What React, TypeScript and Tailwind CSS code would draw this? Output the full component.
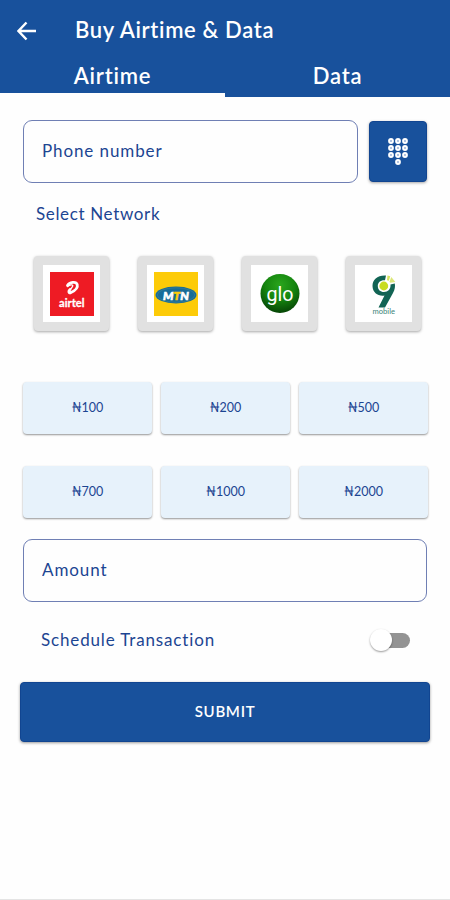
import { useState } from "react";
import type { ReactNode } from "react";

const amounts = ["100", "200", "500", "700", "1000", "2000"];

export default function App() {
  const [tab, setTab] = useState<"airtime" | "data">("airtime");
  const [phone, setPhone] = useState("");
  const [amount, setAmount] = useState("");
  const [scheduled, setScheduled] = useState(false);

  return (
    <div className="flex h-[900px] w-[450px] flex-col overflow-hidden border-b border-[#e4e4e4] bg-[#fefefe] font-['Lato',sans-serif] text-[#1c4592]">
      <header className="h-[97px] shrink-0 bg-[#18519c] text-white">
        <div className="flex h-[60px] items-center pl-[17px]">
          <BackIcon />
          <h1 className="ml-[38px] pb-px text-[22px] font-semibold tracking-[0.65px]">
            Buy Airtime &amp; Data
          </h1>
        </div>
        <div className="flex h-[37px]">
          <Tab
            label="Airtime"
            active={tab === "airtime"}
            onClick={() => setTab("airtime")}
          />
          <Tab
            label="Data"
            active={tab === "data"}
            onClick={() => setTab("data")}
          />
        </div>
      </header>

      <main className="flex flex-col pt-[23px]">
        <div className="flex items-center gap-[11px] pr-[23px] pl-[23px]">
          <OutlinedInput
            placeholder="Phone number"
            value={phone}
            onChange={setPhone}
          />
          <button
            type="button"
            aria-label="Contacts"
            className="flex h-[61px] w-[58px] shrink-0 items-center justify-center rounded-[4px] border border-[#114591] bg-[#18519c] shadow-[0_1px_3px_rgba(0,0,0,0.35)]"
          >
            <DialpadIcon />
          </button>
        </div>

        <p className="mt-[21px] ml-[36px] h-5 text-[17px] leading-5 tracking-[0.65px]">
          Select Network
        </p>

        <div className="mt-[32px] flex justify-between pr-[29px] pl-[34px]">
          <NetworkTile>
            <AirtelLogo />
          </NetworkTile>
          <NetworkTile>
            <MtnLogo />
          </NetworkTile>
          <NetworkTile>
            <GloLogo />
          </NetworkTile>
          <NetworkTile>
            <NineMobileLogo />
          </NetworkTile>
        </div>

        <div className="mt-[51px] grid grid-cols-3 gap-x-[9px] gap-y-[32px] pr-[22px] pl-[23px]">
          {amounts.map((value) => (
            <button
              key={value}
              type="button"
              onClick={() => setAmount(value)}
              className="h-[52px] rounded-[4px] bg-[#e7f2fb] text-[12.5px] shadow-[0_1px_2px_rgba(0,0,0,0.42)]"
            >
              ₦{value}
            </button>
          ))}
        </div>

        <div className="mt-[21px] flex px-[23px]">
          <OutlinedInput
            placeholder="Amount"
            value={amount}
            onChange={setAmount}
          />
        </div>

        <div className="mt-[25px] flex h-[26px] items-center justify-between pr-[40px] pl-[41px]">
          <span className="text-[17px] tracking-[0.85px]">
            Schedule Transaction
          </span>
          <button
            type="button"
            role="switch"
            aria-checked={scheduled}
            aria-label="Schedule Transaction"
            onClick={() => setScheduled(!scheduled)}
            className="flex h-[15px] w-[34px] items-center rounded-full bg-[#939393]"
          >
            <span
              className={
                scheduled
                  ? "ml-[17px] size-[22px] shrink-0 rounded-full bg-[#18519c] shadow-[0_1px_2px_rgba(0,0,0,0.4)]"
                  : "-ml-[6px] size-[22px] shrink-0 rounded-full bg-white shadow-[0_1px_2px_rgba(0,0,0,0.4)]"
              }
            />
          </button>
        </div>

        <button
          type="button"
          className="mx-[20px] mt-[29px] h-[60px] rounded-[4px] border border-[#114591] bg-[#18519c] pb-[2px] text-[15px] font-semibold tracking-[0.7px] text-white shadow-[0_1px_3px_rgba(0,0,0,0.4)]"
        >
          SUBMIT
        </button>
      </main>
    </div>
  );
}

function Tab({
  label,
  active,
  onClick,
}: {
  label: string;
  active: boolean;
  onClick: () => void;
}) {
  return (
    <button
      type="button"
      onClick={onClick}
      className={
        active
          ? "flex-1 border-b-4 border-[#fefefe] pb-[2px] text-[22px] leading-[30px] font-semibold tracking-[0.8px]"
          : "flex-1 border-b-4 border-[#18519c] pb-[2px] text-[22px] leading-[30px] font-semibold tracking-[0.8px]"
      }
    >
      {label}
    </button>
  );
}

function OutlinedInput({
  placeholder,
  value,
  onChange,
}: {
  placeholder: string;
  value: string;
  onChange: (value: string) => void;
}) {
  return (
    <input
      type="text"
      placeholder={placeholder}
      value={value}
      onChange={(e) => onChange(e.target.value)}
      className="h-[63px] min-w-0 flex-1 rounded-[9px] border border-[#6f7fb4] bg-transparent px-[18px] pb-[3px] text-[17px] tracking-[0.9px] outline-none placeholder:text-[#1c4592]"
    />
  );
}

function NetworkTile({ children }: { children: ReactNode }) {
  return (
    <button
      type="button"
      className="flex size-[75px] items-center justify-center rounded-[4px] border-[9px] border-[#e1e1e1] bg-white shadow-[0_1px_3px_rgba(0,0,0,0.35)]"
    >
      {children}
    </button>
  );
}

function BackIcon() {
  return (
    <svg width="20" height="20" viewBox="0 0 20 20" className="mt-[2px]">
      <path
        d="M19 10H2M9.500 1.500L1.500 10L9.500 18.500"
        fill="none"
        stroke="currentColor"
        strokeWidth="2.400"
      />
    </svg>
  );
}

function DialpadIcon() {
  const keys = [
    [3, 3],
    [10, 3],
    [17, 3],
    [3, 10],
    [10, 10],
    [17, 10],
    [3, 17],
    [10, 17],
    [17, 17],
    [10, 24],
  ];
  return (
    <svg width="20" height="27" viewBox="0 0 20 27">
      {keys.map(([x, y]) => (
        <g key={`${x}-${y}`}>
          <circle cx={x} cy={y} r="2.9" fill="#fff" />
          <circle cx={x} cy={y} r="0.9" fill="#8fa9d3" />
        </g>
      ))}
    </svg>
  );
}

function AirtelLogo() {
  return (
    <svg width="44" height="44" viewBox="0 0 44 44">
      <rect width="44" height="44" fill="#ee1b24" />
      <path
        d="M17.500 13.500C19.500 10 26 9 27.200 12.500C28.200 16 24.500 19 20.500 20.800C18.500 21.300 18.300 19 20 17.500"
        fill="none"
        stroke="#fff"
        strokeWidth="2.800"
        strokeLinecap="round"
      />
      <path
        d="M17.500 14.500C20 12.500 22.800 12.300 22.800 13.800C22.800 15.200 20.800 16.500 19.800 18"
        fill="none"
        stroke="#fff"
        strokeWidth="1.300"
        strokeLinecap="round"
      />
      <text
        x="9"
        y="34.500"
        fill="#fff"
        stroke="#fff"
        strokeWidth="0.300"
        fontSize="12"
        fontWeight="700"
        textLength="25.500"
        lengthAdjust="spacingAndGlyphs"
      >
        airtel
      </text>
    </svg>
  );
}

function MtnLogo() {
  return (
    <svg width="44" height="44" viewBox="0 0 44 44">
      <rect width="44" height="44" fill="#fdcb08" />
      <ellipse cx="22" cy="23" rx="20.500" ry="8.500" fill="#176c98" />
      <ellipse
        cx="22"
        cy="23"
        rx="18.700"
        ry="7.200"
        fill="none"
        stroke="#3e8092"
        strokeWidth="0.700"
      />
      <text
        x="9"
        y="27.500"
        fill="#fff"
        stroke="#fff"
        strokeWidth="0.600"
        fontSize="12"
        fontWeight="900"
        fontStyle="italic"
        textLength="26"
        lengthAdjust="spacingAndGlyphs"
      >
        M
        <tspan fill="#fdcb08" stroke="#fdcb08">
          T
        </tspan>
        N
      </text>
    </svg>
  );
}

function GloLogo() {
  return (
    <svg width="44" height="44" viewBox="0 0 44 44">
      <defs>
        <radialGradient id="glo-ball" cx="0.5" cy="0.28" r="0.75">
          <stop offset="0" stopColor="#2aa51d" />
          <stop offset="0.5" stopColor="#15860f" />
          <stop offset="1" stopColor="#053f05" />
        </radialGradient>
      </defs>
      <circle cx="22" cy="21.500" r="19.500" fill="url(#glo-ball)" />
      <text
        x="8.500"
        y="28.500"
        fill="#fff"
        fontFamily="Roboto, sans-serif"
        fontSize="21"
        textLength="27"
        lengthAdjust="spacingAndGlyphs"
      >
        glo
      </text>
    </svg>
  );
}

function NineMobileLogo() {
  return (
    <svg width="44" height="44" viewBox="0 0 44 44">
      <path
        d="M24 3.500C15.500 3 10.500 7.500 10.500 14C10.700 21 16.500 24.500 22.500 23.500L16.500 35.500H23L31 21C33 17.500 33.300 14.500 32.800 11.500L28.500 12.500C29 17 26 20 22 20C18.300 20 15.800 17.800 15.800 14C15.800 10.500 18.500 8 23 8.300Z"
        fill="#126454"
      />
      <circle cx="21.800" cy="14" r="4.400" fill="#c8dc20" />
      <path d="M25.500 3.500L28.300 4.300L26.800 8.800L25 8.300Z" fill="#d5e35c" />
      <path d="M29.300 5L33.300 10L28.200 10.800L27.500 9.500Z" fill="#dce77a" />
      <text
        x="10.500"
        y="41.500"
        fill="#3b8378"
        fontSize="7"
        textLength="22.500"
        lengthAdjust="spacingAndGlyphs"
      >
        mobile
      </text>
    </svg>
  );
}
